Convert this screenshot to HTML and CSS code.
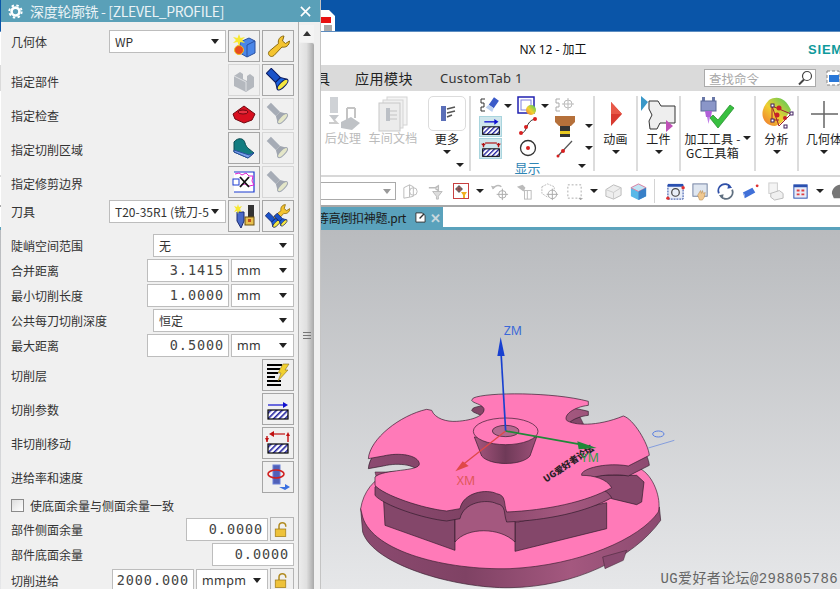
FILE: index.html
```html
<!DOCTYPE html>
<html lang="zh">
<head>
<meta charset="utf-8">
<title>NX 12 - 加工</title>
<link rel="stylesheet" href="styles.css">
</head>
<body>
<svg class="defs" aria-hidden="true">
  <defs>
    <pattern id="hatch" width="4" height="4" patternUnits="userSpaceOnUse" patternTransform="rotate(45)">
      <rect width="4" height="4" fill="#fff"/><rect width="1.6" height="4" fill="#2222a0"/>
    </pattern>
    <linearGradient id="sideGrad" x1="0" x2="1" y1="0" y2="0">
      <stop offset="0" stop-color="#8c4a70"/><stop offset=".35" stop-color="#7f4264"/><stop offset=".7" stop-color="#a4587f"/><stop offset="1" stop-color="#8c4a70"/>
    </linearGradient>
    <linearGradient id="coneGrad" x1="0" x2="1" y1="0" y2="0">
      <stop offset="0" stop-color="#a8567f"/><stop offset=".5" stop-color="#6f3a58"/><stop offset="1" stop-color="#9c5078"/>
    </linearGradient>
    <linearGradient id="surfGrad" x1="0" x2="1" y1="1" y2="0">
      <stop offset="0" stop-color="#f07030"/><stop offset=".45" stop-color="#f0d030"/><stop offset="1" stop-color="#40c860"/>
    </linearGradient>
    <symbol id="i-flash" viewBox="0 0 24 24">
      <g transform="rotate(-45 12 12)"><rect x="8.5" y="-1" width="7" height="13" fill="#1a52c8" stroke="#0a1a60"/><path d="M8.5 12 5 18h14l-3.500-6z" fill="#1a62e0" stroke="#0a1a60"/><ellipse cx="12" cy="18.500" rx="7" ry="2.600" fill="#f4e640" stroke="#0a1a60"/></g>
    </symbol>
    <symbol id="i-flash-off" viewBox="0 0 24 24">
      <g transform="rotate(-45 12 12)"><rect x="9" y="-1" width="6" height="13" fill="#a6acb6"/><path d="M9 12 5.500 18h13L15 12z" fill="#a0a6b0"/><ellipse cx="12" cy="18.500" rx="6.500" ry="2.400" fill="#e4e6c8" stroke="#a0a6b0"/></g>
    </symbol>
    <symbol id="i-wrench" viewBox="0 0 24 24">
      <path d="M18 2c-4 0-6.500 4-5.500 7.500L3.500 17c-3 3 1 7.500 4.500 4.500l8-8.500c3.500 1 7.500-1.500 7.500-6l-4 2.500-3-2.500z" fill="#f4c430" stroke="#8a6a10"/>
    </symbol>
    <symbol id="i-lock" viewBox="0 0 24 24">
      <path d="M8 12V8a4.500 4.500 0 0 1 9 0v1" fill="none" stroke="#b08a20" stroke-width="2"/>
      <rect x="3" y="12" width="14" height="10" fill="#eec23a" stroke="#a07c18"/>
    </symbol>
    <symbol id="i-hatch" viewBox="0 0 24 24">
      <rect x="2" y="13" width="20" height="9" fill="url(#hatch)" stroke="#000" stroke-width="1.200"/>
    </symbol>
  </defs>
</svg>

<div class="app">
  <header class="os-bar"><svg class="doc-icon" viewBox="0 0 14 22"><path d="M0 0h8l6 6v16H0z" fill="#fff"/><rect x="0" y="7" width="10" height="6" fill="#e81010"/><rect x="3" y="15" width="8" height="6" fill="#aaa"/></svg></header>
  <div class="title-row"><span class="app-title">NX 12 - 加工</span><span class="siemens">SIEMENS</span></div>
  <nav class="tab-row">
    <span class="tab-cut">具</span>
    <span class="tab-cn">应用模块</span>
    <span class="tab-en">CustomTab 1</span>
    <span class="search"><span class="search-text">查找命令</span><svg class="search-icon" viewBox="0 0 16 16"><circle cx="10" cy="6" r="4.500" fill="#fff" stroke="#444" stroke-width="1.200"/><path d="M7 9.500 2 14.500" stroke="#444" stroke-width="2"/></svg></span>
    <svg class="win-icon" viewBox="0 0 14 16"><rect x="1" y="1" width="12" height="14" fill="#fff" stroke="#888" stroke-dasharray="3 2"/><rect x="3" y="5" width="10" height="7" fill="#2a78d8"/></svg>
  </nav>

  <section class="ribbon">
    <div class="group g-file">
      <div class="cmd c44 off">
        <svg class="cmd-icon" viewBox="0 0 36 36"><rect x="5" y="1" width="8" height="16" fill="#cfd2d6"/><path d="M4 19h10l-5 6z" fill="#c4c7cb"/><path d="M22 12v12M30 12v10M22 12h8" stroke="#c4c4c4" stroke-width="2" fill="none"/><path d="M16 26l10-5 9 6-8 7-11-2z" fill="#bfc2c6"/><path d="M4 27h8l-3-3" stroke="#ccc" fill="none" stroke-width="2"/></svg>
        <span class="cmd-label">后处理</span>
      </div>
      <div class="cmd c56 off">
        <svg class="cmd-icon" viewBox="0 0 36 36"><rect x="12" y="1" width="20" height="28" fill="#f4f4f4" stroke="#d4d4d4"/><rect x="8" y="4" width="20" height="28" fill="#f0f0f0" stroke="#d4d4d4"/><rect x="4" y="7" width="21" height="28" fill="#ececec" stroke="#c8c8c8"/><rect x="11" y="12" width="4" height="13" fill="#bcc0c6"/><path d="M15 15h7M15 19h7M15 23h7" stroke="#c4c4c4"/></svg>
        <span class="cmd-label">车间文档</span>
      </div>
      <div class="cmd c50">
        <span class="more-box"><svg class="more-icon" viewBox="0 0 20 20"><rect x="4" y="2" width="5" height="15" fill="#5b6fb8"/><path d="M10 5l8-2M10 9l8-2M10 13l5-2" stroke="#555" stroke-width="1.500"/></svg></span>
        <span class="cmd-label dark">更多</span>
        <i class="caret small"></i>
      </div>
      <i class="caret small group-caret"></i>
    </div>

    <div class="group g-show">
      <div class="show-grid">
        <div class="cell lead"><svg class="s20" viewBox="0 0 20 20"><path d="M5 3H1v4h3v4H1v4h4" stroke="#333" fill="none"/><g transform="rotate(35 13 8)"><rect x="10" y="2" width="6" height="9" fill="#3a5ac8"/><path d="M10 11l-1 4h8l-1-4z" fill="#bcd0f0"/></g></svg><i class="caret small gap"></i></div>
        <div class="cell lead"><svg class="s20" viewBox="0 0 20 20"><rect x="1" y="1" width="16" height="16" fill="#fff" stroke="#2020b0" stroke-width="1.500"/><rect x="4" y="4" width="10" height="10" fill="none" stroke="#8080e0"/><circle cx="14" cy="14" r="5" fill="url(#surfGrad)"/></svg><i class="caret small gap"></i></div>
        <div class="cell"><svg class="s20" viewBox="0 0 20 20"><path d="M5 3H1v4h3v4H1v4h4" stroke="#aaa" fill="none"/><circle cx="13" cy="8" r="4" fill="none" stroke="#bbb"/><path d="M13 2v12M7 8h12" stroke="#bbb"/></svg></div>
        <i class="caret small none"></i>

        <div class="cell sel"><svg class="s20" viewBox="0 0 24 24"><path d="M4 7h14" stroke="#1010d0" stroke-width="1.600"/><path d="M16 3.500 21 7l-5 3.500z" fill="#1010d0"/><use href="#i-hatch"/></svg></div>
        <div class="cell"><svg class="s20" viewBox="0 0 20 20"><path d="M3 17C10 17 7 5 17 3" fill="none" stroke="#333"/><circle cx="3" cy="17" r="2" fill="#d82020"/><circle cx="8" cy="11" r="2" fill="#d82020"/><circle cx="17" cy="3" r="2" fill="#d82020"/></svg></div>
        <div class="cell"><svg class="s24" viewBox="0 0 24 24"><path d="M2 2h20v6l-4 4H6L2 8z" fill="#b5703a"/><rect x="7" y="12" width="10" height="5" fill="#333"/><rect x="7" y="17" width="10" height="3" fill="#e8c820"/><rect x="7" y="20" width="10" height="3" fill="#333"/></svg></div>
        <i class="caret small"></i>

        <div class="cell sel"><svg class="s20" viewBox="0 0 24 24"><path d="M5 6h14" stroke="#b01010" stroke-width="1.400"/><path d="M3 6v5M21 6v5" stroke="#b01010" stroke-width="1.600"/><path d="M0 7l3 3 3-3zM18 7l3 3 3-3z" fill="#b01010"/><use href="#i-hatch"/></svg></div>
        <div class="cell"><svg class="s20" viewBox="0 0 20 20"><circle cx="10" cy="10" r="7.500" fill="#fff" stroke="#333" stroke-width="1.300"/><circle cx="10" cy="10" r="2" fill="#d82020"/></svg></div>
        <div class="cell"><svg class="s20" viewBox="0 0 20 20"><path d="M3 18 17 3" stroke="#555" stroke-width="1.200"/><circle cx="8" cy="13" r="2" fill="#d82020"/><circle cx="3" cy="18" r="1.500" fill="#d82020"/></svg></div>
        <i class="caret small"></i>
      </div>
      <span class="group-label">显示</span>
      <i class="caret small show-end"></i>
    </div>

    <div class="group g-anim">
      <div class="cmd">
        <svg class="cmd-icon" viewBox="0 0 36 36"><path d="M13 6l11 12-11 12z" fill="#d83a30"/><path d="M13 6l11 12H13z" fill="#e85848"/></svg>
        <span class="cmd-label dark">动画</span>
        <i class="caret small"></i>
      </div>
    </div>
    <div class="group g-work">
      <div class="cmd">
        <svg class="cmd-icon" viewBox="0 0 36 36"><path d="M8 5h9l3 5h14v17H19l-3 6H9l-1-8 3-6-3-6z" fill="#eee" stroke="#333"/><path d="M0 0l7 6-7 9z" fill="#3a98c8"/><path d="M25 24l7 6-7 6z" fill="#c050b8"/></svg>
        <span class="cmd-label dark">工件</span>
        <i class="caret small"></i>
      </div>
    </div>
    <div class="group g-tool">
      <div class="cmd">
        <svg class="cmd-icon wide" viewBox="0 0 36 36"><rect x="2" y="1" width="3" height="5" fill="#6a78a8"/><rect x="12" y="1" width="3" height="5" fill="#6a78a8"/><rect x="1" y="5" width="15" height="10" fill="#8a96c8" stroke="#5a6898"/><path d="M5 15h7l-1 6H6z" fill="#b060d8"/><path d="M7 21h3l-1.500 7z" fill="#c080e8"/><path d="M10 22l8 10 16-20-4-3-12 15-5-5z" fill="#38c040" stroke="#2a9030" stroke-width=".8"/></svg>
        <div class="two-line">
          <span class="stack"><span class="cmd-label dark">加工工具 -</span><span class="cmd-label dark">GC工具箱</span></span>
          <i class="caret small"></i>
        </div>
      </div>
    </div>
    <div class="group g-ana">
      <div class="cmd">
        <svg class="cmd-icon wide" viewBox="0 0 36 36"><path d="M10 4C18-1 27 2 32 14 26 22 24 28 16 30 4 30-2 16 10 4z" fill="url(#surfGrad)"/><path d="M13 10l7 20 12-12zM13 10v14h7" fill="none" stroke="#a02030"/><rect x="12" y="8" width="3" height="3" fill="#fff" stroke="#402060"/><rect x="12" y="23" width="3" height="3" fill="#fff" stroke="#402060"/><rect x="31" y="16" width="3" height="3" fill="#fff" stroke="#402060"/><rect x="25" y="29" width="3" height="3" fill="#fff" stroke="#402060"/><circle cx="20" cy="12" r="2.500" fill="#c82028"/><circle cx="18" cy="19" r="2.500" fill="#c82028"/><circle cx="26" cy="22" r="2" fill="#c82028"/></svg>
        <span class="cmd-label dark">分析</span>
        <i class="caret small"></i>
      </div>
    </div>
    <div class="group g-geo">
      <div class="cmd">
        <svg class="cmd-icon" viewBox="0 0 36 36"><path d="M18 5v27M5 18h27" stroke="#666" stroke-width="1.500"/></svg>
        <span class="cmd-label dark">几何体</span>
        <i class="caret small"></i>
      </div>
    </div>
  </section>

  <div class="toolbar">
    <span class="combo"><i class="caret grey"></i></span>
    <span class="t"><svg class="s20" viewBox="0 0 20 20"><path d="M3 6l6-3 0 13-6 1zM9 3l4 2v10l-4 1" fill="none" stroke="#bbb"/><circle cx="13" cy="10" r="4" fill="none" stroke="#bbb"/></svg></span>
    <span class="t"><svg class="s20" viewBox="0 0 20 20"><path d="M3 6h7l3-2v5l-3-2" fill="none" stroke="#bbb" stroke-width="1.500"/><path d="M7 10h10l-4 5v3h-2v-3z" fill="#ddd" stroke="#bbb"/></svg></span>
    <span class="t"><svg class="boxed" viewBox="0 0 16 16"><rect x=".5" y=".5" width="15" height="15" fill="#fff" stroke="#c84040"/><circle cx="6" cy="6" r="2.500" fill="#e06060" stroke="#666"/><path d="M6 2v8M2 6h8" stroke="#444" stroke-width=".8"/><path d="M8 9h6l-2 3v3h-2v-3z" fill="#f0b020"/></svg></span>
    <i class="caret small ta"></i>
    <span class="t"><svg class="s20" viewBox="0 0 20 20"><path d="M3 7a6 6 0 0 1 9-2" fill="none" stroke="#bbb" stroke-width="1.500"/><path d="M1 4l2 4 3-3z" fill="#bbb"/><circle cx="13" cy="13" r="4" fill="none" stroke="#aaa"/><path d="M13 7v12M7 13h12" stroke="#aaa"/></svg></span>
    <span class="t"><svg class="s20" viewBox="0 0 20 20"><path d="M2 5l6-2 3 3-2 4z" fill="#bbb"/><rect x="10" y="9" width="7" height="9" fill="#fff" stroke="#bbb"/><path d="M13 9v9" stroke="#bbb"/></svg></span>
    <span class="t"><svg class="s20" viewBox="0 0 20 20"><path d="M2 5l6-3 7 3v7l-7 4-6-4z" fill="none" stroke="#bbb" stroke-dasharray="2 1"/><circle cx="13" cy="13" r="4.500" fill="#fff" stroke="#aaa"/><path d="M13 7v12M7 13h12" stroke="#aaa"/></svg></span>
    <span class="t"><svg class="s20" viewBox="0 0 20 20"><rect x="3" y="3" width="14" height="14" fill="none" stroke="#aaa" stroke-dasharray="2 2"/><path d="M14 17h5l-2.500 2z" fill="#999"/></svg></span>
    <i class="caret small ta"></i>
    <span class="t"><svg class="s20" viewBox="0 0 20 20"><path d="M2 8l8-5 8 3v8l-8 4-8-3z" fill="#eee" stroke="#bbb"/><path d="M2 8l8 3 8-5M10 11v7" fill="none" stroke="#ccc"/></svg></span>
    <span class="t"><svg class="s20" viewBox="0 0 20 20"><path d="M2 6l8-4 8 4v9l-8 4-8-4z" fill="#58b8e8"/><path d="M2 6l8 4 8-4-8-4z" fill="#bfe4f4" stroke="#e080a0"/><path d="M10 10v9l8-4V6z" fill="#3880c8"/></svg></span>
    <span class="tool-sep"></span>
    <span class="t"><svg class="s20" viewBox="0 0 20 20"><rect x="2" y="3" width="16" height="15" fill="#e8eef8" stroke="#2040a0" stroke-dasharray="2 1"/><rect x="2" y="2" width="16" height="3" fill="#2a50b0"/><circle cx="10" cy="11" r="4" fill="none" stroke="#444" stroke-width="1.300"/><circle cx="2" cy="17" r="1.800" fill="#e03030"/><circle cx="18" cy="6" r="1.800" fill="#e03030"/></svg></span>
    <span class="t"><svg class="s20" viewBox="0 0 20 20"><rect x="2" y="2" width="15" height="13" fill="#dfe6f0" stroke="#7080a0"/><path d="M10 9l1 3 1-3 1 3 2-1-1 5-2 3h-3l-2-5z" fill="#f0c890" stroke="#b08040" stroke-width=".5"/></svg></span>
    <span class="t"><svg class="s20" viewBox="0 0 20 20"><path d="M3 12A7 7 0 0 1 15 5" fill="none" stroke="#3050a8" stroke-width="2"/><path d="M17 8a7 7 0 0 1-12 7" fill="none" stroke="#607080" stroke-width="2"/><path d="M13 2l4 4-5 1z" fill="#3050a8"/><path d="M7 18l-4-4 5-1z" fill="#607080"/></svg></span>
    <span class="t"><svg class="s20" viewBox="0 0 20 20"><path d="M2 11l10-5 3 5-11 6z" fill="#4070d8"/><path d="M2 11l2 6V13z" fill="#a0b8f0"/><circle cx="17" cy="4" r="1.500" fill="#e03030"/></svg></span>
    <span class="t"><svg class="s20" viewBox="0 0 20 20"><rect x="3" y="1" width="9" height="11" fill="#f4f4f4" stroke="#ccc"/><path d="M5 12l9-3 4 3v5l-9 2-4-3z" fill="#f0f0f0" stroke="#bbb"/></svg></span>
    <span class="t"><svg class="s20" viewBox="0 0 20 20"><rect x="3" y="3" width="14" height="14" fill="#e8ecf8" stroke="#2a50b0"/><rect x="3" y="3" width="14" height="2.500" fill="#2a50b0"/><path d="M6 8h3v2H6zM11 8h3v2h-3zM6 12h3v2H6zM11 12h3v2h-3z" fill="#e04040"/></svg></span>
    <i class="caret small ta"></i>
    <span class="t"><svg class="s20" viewBox="0 0 20 20"><path d="M2 12c0-6 6-10 9-9l3 7 4 3-6 4H4z" fill="#777"/></svg></span>
  </div>

  <div class="file-row"><span class="file-tab"><span class="file-name">等高倒扣神题.prt</span><svg class="file-icon" viewBox="0 0 12 12"><path d="M1 1h7l3 3v7H1z" fill="#fff" stroke="#333"/><path d="M5 7l5-5" stroke="#333" stroke-width="1.500"/></svg><span class="file-x">✕</span></span></div>

  <main class="viewport">
    <svg class="scene" viewBox="0 0 840 361" preserveAspectRatio="xMinYMin slice">
      <g transform="translate(340 82) scale(.33333)">
        <!-- base -->
        <path d="M62 590 68 660C100 760 350 830 510 827 700 825 880 740 962 625L958 585 500 500Z" fill="url(#sideGrad)" stroke="#3a2030" stroke-width="2"/>
        <path d="M788 735 860 715 850 745 795 770Z" fill="#8a4a70" stroke="#3a2030" stroke-width="1.500"/>
        <path d="M62 590C70 540 100 500 150 480L900 470C940 490 965 560 955 600 900 680 720 760 510 770 320 775 100 720 68 615Z" fill="#ff7ab8" stroke="#3a2030" stroke-width="2"/>
        <!-- walls -->
        <path d="M130 552 345 622V715L135 640Z" fill="#84476a" stroke="#2e1a28" stroke-width="2"/>
        <path d="M525 632 800 572V650L525 718Z" fill="#84476a" stroke="#2e1a28" stroke-width="2"/>
        <path d="M345 600C370 530 480 530 525 610V690C480 645 380 645 345 690Z" fill="#a4587f" stroke="#2e1a28" stroke-width="2"/>
        <path d="M730 490 890 490 912 510 905 570 890 578 815 560Z" fill="#84476a" stroke="#2e1a28" stroke-width="2"/>
        <path d="M105 480H235L200 500 110 500Z" fill="#9c5078" stroke="#2e1a28" stroke-width="1.500"/>
        <path d="M680 325 720 315 735 345 690 340Z" fill="#84476a" stroke="#2e1a28" stroke-width="1.500"/>
        <!-- plate thickness -->
        <path transform="translate(0 30)" d="M400 258C440 240 640 240 745 268V280C700 285 670 310 680 325 700 340 770 345 850 312 880 320 925 395 928 430L865 462C800 450 720 470 725 490 760 490 800 500 815 527 740 570 620 595 500 600 490 575 500 550 470 545 440 530 370 540 360 590L320 597C250 590 130 550 105 520V495C130 470 240 480 238 455 235 430 180 420 130 432L85 440C90 380 180 310 260 292L275 295C285 320 320 330 350 328 400 325 435 310 432 290 425 275 400 275 395 265Z" fill="url(#sideGrad)" stroke="#2e1a28" stroke-width="2"/>
        <!-- plate top -->
        <path d="M400 258C440 240 640 240 745 268V280C700 285 670 310 680 325 700 340 770 345 850 312 880 320 925 395 928 430L865 462C800 450 720 470 725 490 760 490 800 500 815 527 740 570 620 595 500 600 490 575 500 550 470 545 440 530 370 540 360 590L320 597C250 590 130 550 105 520V495C130 470 240 480 238 455 235 430 180 420 130 432L85 440C90 380 180 310 260 292L275 295C285 320 320 330 350 328 400 325 435 310 432 290 425 275 400 275 395 265Z" fill="#ff7ab8" stroke="#2e1a28" stroke-width="2"/>
        <!-- boss -->
        <path d="M403 375 425 432C450 462 545 462 570 432L590 375Z" fill="url(#coneGrad)" stroke="#2e1a28" stroke-width="2"/>
        <ellipse cx="497" cy="358" rx="97" ry="40" fill="#ff7ab8" stroke="#2e1a28" stroke-width="2"/>
        <ellipse cx="497" cy="357" rx="40" ry="17" fill="#b5688f" stroke="#2e1a28" stroke-width="2"/>
        <!-- engraved text -->
        <text class="engrave" transform="translate(618 512) rotate(-34)">UG爱好者论坛</text>
        <!-- wcs -->
        <path d="M925 408 1003 385" stroke="#5a80e0" stroke-width="2"/>
        <ellipse cx="955" cy="366" rx="17" ry="9" fill="none" stroke="#5a80e0" stroke-width="3"/>
        <!-- axes -->
        <path d="M497 357 483 120" stroke="#1840d0" stroke-width="5"/>
        <path d="M482 75 472 132H494Z" fill="#1840d0"/>
        <path d="M497 357 372 455" stroke="#e04848" stroke-width="4"/>
        <path d="M346 478 368 448 386 462Z" fill="#e04848"/>
        <path d="M497 357 725 398" stroke="#208838" stroke-width="5"/>
        <path d="M770 408 712 388 716 412Z" fill="#208838"/>
        <text class="axis ax-z" x="491" y="68">ZM</text>
        <text class="axis ax-x" x="350" y="518">XM</text>
        <text class="axis ax-y" x="722" y="450">YM</text>
      </g>
    </svg>
    <span class="watermark">UG爱好者论坛@298805786</span>
  </main>
</div>

<aside class="dialog">
  <div class="dlg-title">
    <svg class="gear" viewBox="0 0 16 16"><circle cx="8" cy="8" r="4.200" fill="none" stroke="#fff" stroke-width="2.800"/><circle cx="8" cy="8" r="6.600" fill="none" stroke="#fff" stroke-width="2" stroke-dasharray="2.600 2.600"/></svg>
    <span class="dlg-name">深度轮廓铣 - [ZLEVEL_PROFILE]</span>
    <svg class="close" viewBox="0 0 12 12"><path d="M1 1 11 11M11 1 1 11" stroke="#fff" stroke-width="1.800"/></svg>
  </div>
  <div class="dlg-body">
    <div class="form">
      <div class="row btns top"><label class="lbl">几何体</label><span class="sel-box w117"><span>WP</span><i class="caret"></i></span>
        <button class="ib"><svg class="ic" viewBox="0 0 24 24"><path d="M8 8l9-4 6 3v12l-8 4-7-4z" fill="#4a86e8" stroke="#2a50a0"/><path d="M15 23V11l8-4" fill="none" stroke="#2a50a0"/><path d="M7 0l1.500 4L13 3l-3 3 3 3-4.500-1L7 12 5.500 8 1 9l3-3-3-3 4.500 1z" fill="#f8e830"/><circle cx="7" cy="16" r="4.500" fill="#e84a20" stroke="#f0c020"/></svg></button>
        <button class="ib"><svg class="ic" viewBox="0 0 24 24"><use href="#i-wrench"/></svg></button></div>
      <div class="row btns low"><label class="lbl">指定部件</label>
        <button class="ib off"><svg class="ic" viewBox="0 0 24 24"><path d="M2 8l6-4 3 2v5l4 2v-5l3-2 4 3v10l-8 5-12-6z" fill="#b4b8be"/><path d="M2 8l12 6v9" fill="none" stroke="#dfe1e4"/></svg></button>
        <button class="ib"><svg class="ic" viewBox="0 0 24 24"><use href="#i-flash"/></svg></button></div>
      <div class="row btns low"><label class="lbl">指定检查</label>
        <button class="ib"><svg class="ic" viewBox="0 0 24 24"><path d="M1 12 12 4l11 8-3 6-8 3-9-4z" fill="#d81020" stroke="#700810"/><ellipse cx="11" cy="10" rx="5" ry="2" fill="#e83040" stroke="#700810"/></svg></button>
        <button class="ib off"><svg class="ic" viewBox="0 0 24 24"><use href="#i-flash-off"/></svg></button></div>
      <div class="row btns low"><label class="lbl">指定切削区域</label>
        <button class="ib"><svg class="ic" viewBox="0 0 24 24"><path d="M2 16V6C6 1 12 2 13 7s6 7 9 10l-6 5z" fill="#127c80" stroke="#0a4a50"/><path d="M2 16l14 6 6-5-5 2-15-5z" fill="#7aa0e8" stroke="#2a50a0"/></svg></button>
        <button class="ib off"><svg class="ic" viewBox="0 0 24 24"><use href="#i-flash-off"/></svg></button></div>
      <div class="row btns low"><label class="lbl">指定修剪边界</label>
        <button class="ib"><svg class="ic" viewBox="0 0 24 24"><path d="M2 2h20v20H2" fill="#fff" stroke="#1a3ad0" stroke-width="1.200"/><rect x="1" y="9" width="6" height="6" fill="#fff" stroke="#1a3ad0"/><path d="M3 4l4-1 3 2 4-2 3 3 4 0-1 5 2 4-5 1-4-2-4 1" fill="none" stroke="#e020d0"/><path d="M8 7l9 10M17 7 8 17" stroke="#111" stroke-width="1.800"/></svg></button>
        <button class="ib off"><svg class="ic" viewBox="0 0 24 24"><use href="#i-flash-off"/></svg></button></div>
      <div class="row btns top"><label class="lbl">刀具</label><span class="sel-box w117"><span>T20-35R1 (铣刀-5</span><i class="caret"></i></span>
        <button class="ib"><svg class="ic" viewBox="0 0 24 24"><path d="M5 8h7v9l-3 7-4-7z" fill="#4a6ac8" stroke="#1a2a70"/><path d="M6 0l1 3 3-1-2 3 2 3-3-1-1 3-1-3-3 1 2-3-2-3 3 1z" fill="#f8e830"/><rect x="16" y="1" width="6" height="13" fill="#333"/><rect x="13" y="13" width="9" height="8" fill="#e8c050" stroke="#6a5010"/><rect x="16" y="15" width="3" height="3" fill="#c05020"/></svg></button>
        <button class="ib"><svg class="ic" viewBox="0 0 24 24"><g transform="translate(5 -1) scale(.8)"><use href="#i-wrench" width="24" height="24"/></g><g transform="translate(-1 8) scale(.7)"><use href="#i-flash" width="24" height="24"/></g><g transform="translate(8 9) scale(.6)"><use href="#i-flash" width="24" height="24"/></g></svg></button></div>

      <div class="row"><label class="lbl">陡峭空间范围</label><span class="sel-box w141"><span>无</span><i class="caret"></i></span></div>
      <div class="row"><label class="lbl">合并距离</label><span class="num">3.1415</span><span class="sel-box w63"><span class="unit">mm</span><i class="caret"></i></span></div>
      <div class="row"><label class="lbl">最小切削长度</label><span class="num">1.0000</span><span class="sel-box w63"><span class="unit">mm</span><i class="caret"></i></span></div>
      <div class="row"><label class="lbl">公共每刀切削深度</label><span class="sel-box w141"><span>恒定</span><i class="caret"></i></span></div>
      <div class="row"><label class="lbl">最大距离</label><span class="num">0.5000</span><span class="sel-box w63"><span class="unit">mm</span><i class="caret"></i></span></div>

      <div class="row btns"><label class="lbl">切削层</label>
        <button class="ib"><svg class="ic" viewBox="0 0 24 24"><path d="M1 2h15M1 6h13M1 10h11M1 14h8M1 18h14M1 22h14" stroke="#000" stroke-width="2"/><path d="M17 1h6l-4 6h3L12 18l3-8h-3z" fill="#f0d030" stroke="#8a7020" stroke-width=".6"/></svg></button></div>
      <div class="row btns"><label class="lbl">切削参数</label>
        <button class="ib"><svg class="ic" viewBox="0 0 24 24"><path d="M2 8h17" stroke="#1010d0" stroke-width="1.200"/><path d="M17 5l5 3-5 3z" fill="#1010d0"/><use href="#i-hatch"/></svg></button></div>
      <div class="row btns"><label class="lbl">非切削移动</label>
        <button class="ib"><svg class="ic" viewBox="0 0 24 24"><path d="M7 3h12" stroke="#c01010" stroke-width="1.200"/><path d="M8 0 3 3l5 3z" fill="#c01010"/><path d="M1 5v6M22 5v6" stroke="#c01010" stroke-width="1.400"/><path d="M-1 7l2 4 2-4zM20 5l2-4 2 4z" fill="#c01010"/><use href="#i-hatch"/></svg></button></div>
      <div class="row btns"><label class="lbl">进给率和速度</label>
        <button class="ib"><svg class="ic" viewBox="0 0 24 24"><rect x="7" y="0" width="7" height="19" fill="#5060b8" stroke="#6a80d8"/><ellipse cx="10" cy="9" rx="8" ry="4" fill="none" stroke="#d02020" stroke-width="1.600"/><path d="M13 22h6v-3l5 3-5 3" fill="#3a70e0"/></svg></button></div>

      <div class="row check"><span class="box"></span><label class="lbl-check">使底面余量与侧面余量一致</label></div>
      <div class="row h24"><label class="lbl">部件侧面余量</label><span class="num">0.0000</span><button class="lock"><svg viewBox="0 0 24 24"><use href="#i-lock"/></svg></button></div>
      <div class="row"><label class="lbl">部件底面余量</label><span class="num">0.0000</span></div>
      <div class="row h24"><label class="lbl">切削进给</label><span class="num wide-num">2000.000</span><span class="sel-box w72"><span class="unit">mmpm</span><i class="caret"></i></span><button class="lock"><svg viewBox="0 0 24 24"><use href="#i-lock"/></svg></button></div>
    </div>
    <div class="scroll">
      <div class="sb-up"><i class="caret up"></i></div>
      <div class="sb-thumb"><span class="grip"></span></div>
    </div>
  </div>
</aside>
</body>
</html>
```

FILE: styles.css
```css
* { box-sizing: border-box; }
html, body { margin: 0; height: 100%; }
body {
  position: relative;
  width: 840px;
  height: 589px;
  overflow: hidden;
  background: #fff;
  font-family: "Noto Sans CJK SC", "Noto Sans", sans-serif;
  font-size: 12px;
  color: #333;
}
.defs { position: absolute; width: 0; height: 0; }
svg { display: block; flex: none; }

/* application */
.app { display: flex; flex-direction: column; height: 589px; }
.os-bar { height: 32px; flex: none; padding: 10px 0 0 321px; background: #0a55a8; border-bottom: 1px solid #5c8cc0; overflow: hidden; }
.doc-icon { width: 14px; height: 22px; }
.title-row { height: 33px; flex: none; position: relative; display: flex; align-items: center; justify-content: center; padding-left: 266px; background: #fff; }
.app-title { font-family: "Noto Sans", "Noto Sans CJK SC", sans-serif; font-size: 12px; color: #111; }
.siemens { position: absolute; left: 808px; top: 10px; font-family: "Liberation Sans", sans-serif; font-weight: 700; font-size: 13px; letter-spacing: .8px; color: #0f9a9c; white-space: nowrap; }
.tab-row { height: 26px; flex: none; display: flex; align-items: center; padding-left: 316px; background: #dadada; font-size: 14px; color: #222; overflow: hidden; }
.tab-cut { width: 39px; }
.tab-cn { width: 85px; letter-spacing: .5px; }
.tab-en { width: 264px; font-family: "Noto Sans", sans-serif; font-size: 13px; letter-spacing: .3px; color: #333; }
.search { width: 112px; height: 18px; flex: none; display: flex; align-items: center; justify-content: space-between; padding: 0 2px 0 4px; background: #fff; border: 1px solid #aaa; }
.search-text { font-size: 12.500px; color: #a8a8a8; }
.search-icon { width: 16px; height: 16px; }
.win-icon { width: 14px; height: 16px; margin-left: 10px; }

.ribbon { height: 86px; flex: none; display: flex; padding: 5px 0 4px 321px; background: #fff; border-bottom: 2px solid #d8d8d8; }
.group { position: relative; flex: none; display: flex; border-right: 2px solid #dcdcdc; }
.g-file { width: 150px; }
.g-show { width: 124px; flex-direction: column; padding-left: 1px; }
.g-anim, .g-work { width: 43px; justify-content: center; }
.g-tool { width: 75px; justify-content: center; }
.g-ana { width: 43px; justify-content: center; }
.g-geo { width: 60px; border-right: 0; padding-right: 10px; justify-content: center; }
.cmd { display: flex; flex-direction: column; align-items: center; flex: none; }
.c44 { width: 44px; }
.c56 { width: 56px; }
.c50 { width: 52px; }
.cmd-icon { width: 36px; height: 36px; }
.cmd-label { display: block; font-size: 12px; line-height: 14px; letter-spacing: .2px; color: #bbb; text-align: center; white-space: nowrap; }
.cmd-label.dark { color: #222; }
.off .cmd-label { margin-top: -1px; }
.more-box { width: 38px; height: 35px; margin-bottom: 1px; display: flex; align-items: center; justify-content: center; border: 1px solid #dcdcdc; border-radius: 5px; }
.more-icon { width: 20px; height: 20px; }
.cmd > .caret { margin-top: 4px; }
.two-line { display: flex; align-items: flex-start; gap: 2px; }
.stack { display: flex; flex-direction: column; }
.two-line .caret { margin-top: 4px; }
.group-caret { position: absolute; left: 135px; top: 67px; }
.show-end { position: absolute; left: 107px; top: 68px; }

.show-grid { display: grid; grid-template-columns: 37px 37px 37px 11px; grid-template-rows: 19px 22px 22px; align-items: center; justify-items: center; }
.cell { width: 100%; height: 100%; display: flex; align-items: center; justify-content: center; }
.cell.lead { justify-content: flex-start; padding-left: 8px; }
.cell.sel { width: 23px; height: 21px; background: #cfe6ec; border: 1px solid #a9d5de; justify-self: start; margin-left: 7px; }
.s20 { width: 20px; height: 20px; }
.s24 { width: 24px; height: 24px; }
.group-label { margin-top: 1px; width: 111px; text-align: center; font-size: 13px; line-height: 16px; color: #2f86b5; }

.caret { display: block; flex: none; width: 0; height: 0; border-left: 4.500px solid transparent; border-right: 4.500px solid transparent; border-top: 5px solid #222; }
.caret.small { border-left-width: 4px; border-right-width: 4px; border-top-width: 4px; }
.caret.grey { border-top-color: #999; }
.caret.gap { margin-left: 4px; }
.caret.none { visibility: hidden; }
.caret.up { border-top: 0; border-bottom: 5px solid #333; }

.toolbar { height: 30px; flex: none; display: flex; align-items: center; padding-left: 321px; background: #fff; border-bottom: 2px solid #a8a8a8; overflow: hidden; }
.combo { width: 75px; height: 18px; flex: none; margin-right: 2px; display: flex; align-items: center; justify-content: flex-end; padding-right: 4px; border: 1px solid #aaa; border-left: 0; }
.t { width: 25px; height: 20px; flex: none; display: flex; align-items: center; justify-content: center; }
.t .s20 { width: 19px; height: 19px; }
.boxed { width: 16px; height: 16px; }
.ta { margin: 0 3px; }
.tool-sep { width: 1px; height: 24px; margin: 0 8px 0 3px; background: #d4d4d4; flex: none; }

.file-row { height: 23px; flex: none; display: flex; padding-left: 300px; background: #fff; border-bottom: 3px solid #5aa2bc; }
.file-tab { width: 143px; display: flex; align-items: center; padding-left: 17px; background: #5aa2bc; }
.file-name { width: 93px; font-size: 12px; letter-spacing: -.3px; color: #1a1a1a; white-space: nowrap; }
.file-icon { width: 11px; height: 11px; margin-left: 5px; }
.file-x { margin-left: 4px; font-size: 13px; font-weight: 700; color: #c8d8de; }

.viewport { position: relative; flex: 1; overflow: hidden; background: linear-gradient(#b9bbbe, #e6e7e9); }
.scene { width: 840px; height: 361px; }
.axis { font-family: "Noto Sans", sans-serif; font-size: 37px; }
.ax-z { fill: #3a68d8; }
.ax-x { fill: #e05858; }
.ax-y { fill: #30a048; }
.engrave { font-family: "Noto Sans CJK SC", sans-serif; font-weight: 900; font-size: 27px; fill: #2a2026; }
.watermark { position: absolute; right: 2px; bottom: 2px; font-family: "Liberation Mono", "Noto Sans CJK SC", monospace; font-size: 14px; letter-spacing: .4px; color: #666; white-space: nowrap; }

/* dialog */
.dialog { position: absolute; left: 1px; top: 0; width: 320px; height: 589px; display: flex; flex-direction: column; background: #f0f0f0; border-right: 1px solid #c4c4c4; }
.dlg-title { height: 22px; flex: none; display: flex; align-items: center; padding: 0 9px 0 7px; background: #5aa0b8; color: #eaf3f6; }
.gear { width: 15px; height: 15px; }
.dlg-name { flex: 1; margin-left: 7px; font-size: 14px; letter-spacing: -.35px; white-space: nowrap; }
.close { width: 11px; height: 11px; }
.dlg-body { flex: 1; min-height: 0; display: flex; overflow: hidden; }
.form { flex: 1; min-width: 0; display: flex; flex-direction: column; gap: 2px; padding: 8px 4px 0 10px; }
.row { flex: none; height: 23px; display: flex; align-items: center; gap: 2px; }
.row.btns { height: 32px; }
.row.top { align-items: flex-start; }
.row.top .lbl { line-height: 23px; }
.row.h24 { height: 24px; }
.row.check { height: 20px; gap: 6px; }
.lbl { flex: 1; min-width: 0; font-size: 12px; letter-spacing: 0; color: #333; white-space: nowrap; }
.low .lbl { padding-top: 2px; }
.lbl-check { font-size: 12px; color: #333; white-space: nowrap; }
.box { width: 13px; height: 13px; flex: none; background: linear-gradient(135deg, #ddd, #fff); border: 1px solid #8a8a8a; }
.sel-box { flex: none; height: 23px; display: flex; align-items: center; justify-content: space-between; padding: 0 6px 0 5px; background: #fff; border: 1px solid #bdbdbd; font-size: 12px; color: #333; white-space: nowrap; overflow: hidden; }
.w117 { width: 117px; }
.w141 { width: 141px; }
.w63 { width: 63px; }
.w72 { width: 72px; }
.unit { font-family: "Noto Sans", sans-serif; font-size: 12.500px; letter-spacing: .4px; }
.num { flex: none; width: 82px; height: 23px; padding-right: 4px; line-height: 21px; text-align: right; background: #fff; border: 1px solid #bdbdbd; font-family: "DejaVu Sans Mono", monospace; font-size: 13.500px; letter-spacing: .9px; color: #444; }
.ib { flex: none; width: 32px; height: 32px; padding: 3px; display: flex; align-items: center; justify-content: center; background: #f0f0f0; border: 1px solid #a6a6a6; }
.ib.off { border-color: #d6d6d6; }
.ic { width: 24px; height: 24px; overflow: visible; }
.lock { flex: none; width: 24px; height: 24px; padding: 2px; background: #f0f0f0; border: 1px solid #b4b4b4; }
.lock svg { width: 18px; height: 18px; }

.scroll { flex: none; width: 22px; display: flex; flex-direction: column; gap: 1px; padding: 3px 6px 0 0; border-left: 1px solid #b0b0b0; }
.sb-up { height: 17px; display: flex; align-items: center; justify-content: center; background: #f4f4f4; }
.sb-thumb { flex: 1; display: flex; align-items: flex-start; justify-content: center; padding-top: 289px; background: linear-gradient(90deg, #ececec, #e0e0e0 50%, #a8a8a8); border-radius: 2px 2px 0 0; }
.grip { width: 8px; height: 7px; border-top: 1px solid #777; border-bottom: 1px solid #777; background: linear-gradient(#777, #777) center / 100% 1px no-repeat; }
```
